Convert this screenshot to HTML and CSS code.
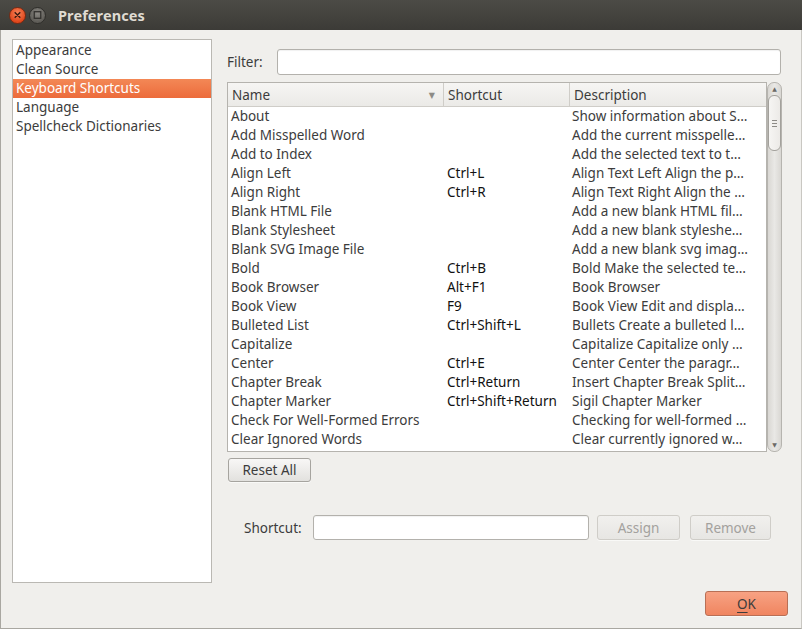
FILE: index.html
```html
<!DOCTYPE html>
<html>
<head>
<meta charset="utf-8">
<link rel="stylesheet" href="styles.css">
</head>
<body>
<div class="window">
  <div class="titlebar">
    <div class="tb-btn close"><svg width="16" height="16" viewBox="0 0 16 16"><path d="M5.5 5.5l5 5M10.5 5.5l-5 5" stroke="#3a1a10" stroke-width="1.6" stroke-linecap="round"/></svg></div>
    <div class="tb-btn max"><svg width="16" height="16" viewBox="0 0 16 16"><rect x="4.5" y="4.5" width="7" height="7" fill="none" stroke="#2e2d2a" stroke-width="1.3"/></svg></div>
    <div class="title">Preferences</div>
  </div>
  <div class="body">
    <div class="main">
      <ul class="sidebar">
        <li>Appearance</li>
        <li>Clean Source</li>
        <li class="sel">Keyboard Shortcuts</li>
        <li>Language</li>
        <li>Spellcheck Dictionaries</li>
      </ul>
      <div class="pane">
        <div class="filter-row">
          <label>Filter:</label>
          <div class="input filter-input"></div>
        </div>
        <div class="table-wrap">
          <div class="table">
            <div class="thead">
              <div class="th c1">Name<span class="sort">&#9660;</span></div>
              <div class="th c2">Shortcut</div>
              <div class="th c3">Description</div>
            </div>
            <div class="tbody">
              <div class="tr"><span class="c1">About</span><span class="c2"></span><span class="c3">Show information about S…</span></div>
              <div class="tr"><span class="c1">Add Misspelled Word</span><span class="c2"></span><span class="c3">Add the current misspelle…</span></div>
              <div class="tr"><span class="c1">Add to Index</span><span class="c2"></span><span class="c3">Add the selected text to t…</span></div>
              <div class="tr"><span class="c1">Align Left</span><span class="c2">Ctrl+L</span><span class="c3">Align Text Left Align the p…</span></div>
              <div class="tr"><span class="c1">Align Right</span><span class="c2">Ctrl+R</span><span class="c3">Align Text Right Align the …</span></div>
              <div class="tr"><span class="c1">Blank HTML File</span><span class="c2"></span><span class="c3">Add a new blank HTML fil…</span></div>
              <div class="tr"><span class="c1">Blank Stylesheet</span><span class="c2"></span><span class="c3">Add a new blank styleshe…</span></div>
              <div class="tr"><span class="c1">Blank SVG Image File</span><span class="c2"></span><span class="c3">Add a new blank svg imag…</span></div>
              <div class="tr"><span class="c1">Bold</span><span class="c2">Ctrl+B</span><span class="c3">Bold Make the selected te…</span></div>
              <div class="tr"><span class="c1">Book Browser</span><span class="c2">Alt+F1</span><span class="c3">Book Browser</span></div>
              <div class="tr"><span class="c1">Book View</span><span class="c2">F9</span><span class="c3">Book View Edit and displa…</span></div>
              <div class="tr"><span class="c1">Bulleted List</span><span class="c2">Ctrl+Shift+L</span><span class="c3">Bullets Create a bulleted l…</span></div>
              <div class="tr"><span class="c1">Capitalize</span><span class="c2"></span><span class="c3">Capitalize Capitalize only …</span></div>
              <div class="tr"><span class="c1">Center</span><span class="c2">Ctrl+E</span><span class="c3">Center Center the paragr…</span></div>
              <div class="tr"><span class="c1">Chapter Break</span><span class="c2">Ctrl+Return</span><span class="c3">Insert Chapter Break Split…</span></div>
              <div class="tr"><span class="c1">Chapter Marker</span><span class="c2">Ctrl+Shift+Return</span><span class="c3">Sigil Chapter Marker</span></div>
              <div class="tr"><span class="c1">Check For Well-Formed Errors</span><span class="c2"></span><span class="c3">Checking for well-formed …</span></div>
              <div class="tr"><span class="c1">Clear Ignored Words</span><span class="c2"></span><span class="c3">Clear currently ignored w…</span></div>
            </div>
          </div>
          <div class="scrollbar">
            <div class="sb-arrow up">&#9650;</div>
            <div class="sb-thumb"><span class="grip"></span></div>
            <div class="sb-space"></div>
            <div class="sb-arrow down">&#9660;</div>
          </div>
        </div>
        <div class="reset-row">
          <button class="btn">Reset All</button>
        </div>
        <div class="shortcut-row">
          <label>Shortcut:</label>
          <div class="input shortcut-input"></div>
          <button class="btn disabled assign">Assign</button>
          <button class="btn disabled remove">Remove</button>
        </div>
      </div>
    </div>
    <div class="footer">
      <button class="btn ok"><u>O</u>K</button>
    </div>
  </div>
</div>
</body>
</html>
```

FILE: styles.css
```css
* { box-sizing: border-box; }
html, body { margin: 0; padding: 0; }
body {
  width: 802px;
  height: 629px;
  overflow: hidden;
  font-family: "Noto Sans", "DejaVu Sans", sans-serif;
  font-size: 13.5px;
  color: #3c3c3c;
  background: #f0efec;
}
.window {
  width: 802px;
  height: 629px;
  display: flex;
  flex-direction: column;
}
.titlebar {
  height: 30px;
  flex: none;
  background: linear-gradient(#4c4b46, #3c3b37);
  display: flex;
  align-items: center;
  padding-left: 9px;
}
.tb-btn {
  width: 17px;
  height: 17px;
  border-radius: 50%;
  display: flex;
  align-items: center;
  justify-content: center;
  margin-right: 3px;
}
.tb-btn.close {
  background: radial-gradient(circle at 50% 35%, #f7845a, #e0471c 70%);
  border: 1px solid #7a2a12;
}
.tb-btn.max {
  background: radial-gradient(circle at 50% 35%, #8a8883, #5e5c57 70%);
  border: 1px solid #2f2e2b;
}
.title {
  color: #dfdbd2;
  font-weight: bold;
  font-size: 14.5px;
  margin-left: 9px;
  letter-spacing: 0.1px;
}
.body {
  flex: 1;
  display: flex;
  flex-direction: column;
  border-left: 1px solid #a9a7a1;
  border-bottom: 1px solid #a9a7a1;
  border-right: 1px solid #c9c7c2;
  padding: 9px 13px 12px 11px;
}
.main {
  flex: 1;
  display: flex;
  gap: 15px;
}
.sidebar {
  list-style: none;
  margin: 0;
  padding: 1px 0 0 0;
  width: 200px;
  height: 544px;
  background: #fff;
  border: 1px solid #bab8b3;
  flex: none;
}
.sidebar li {
  height: 19px;
  line-height: 19px;
  padding-left: 3px;
  white-space: nowrap;
}
.sidebar li.sel {
  background: linear-gradient(#f38856, #ec6b3b);
  color: #fff;
}
.pane {
  flex: 1;
  display: flex;
  flex-direction: column;
  padding-top: 10px;
}
.filter-row {
  display: flex;
  align-items: center;
  height: 26px;
  margin-bottom: 7px;
}
.filter-row label { width: 50px; }
.input {
  height: 26px;
  background: #fff;
  border: 1px solid #b3b1ac;
  border-radius: 3px;
  box-shadow: inset 0 1px 1px rgba(0,0,0,0.06);
}
.filter-input { width: 504px; height: 26px; }
.table-wrap {
  display: flex;
  height: 370px;
}
.table {
  width: 540px;
  border: 1px solid #b5b3ae;
  background: #fff;
  display: flex;
  flex-direction: column;
  overflow: hidden;
}
.thead {
  height: 24px;
  display: flex;
  flex: none;
  background: linear-gradient(#f6f5f3, #ebeae7);
  border-bottom: 1px solid #cfcdc8;
}
.th {
  line-height: 24px;
  padding-left: 4px;
  border-right: 1px solid #cfcdc8;
  position: relative;
}
.th.c3 { border-right: none; }
.c1 { width: 216px; flex: none; }
.c2 { width: 126px; flex: none; }
.c3 { flex: 1; }
.sort {
  position: absolute;
  right: 8px;
  top: 0;
  font-size: 8px;
  color: #8d8b86;
}
.tr {
  display: flex;
  height: 19px;
  line-height: 19px;
  white-space: nowrap;
}
.tr span { padding-left: 3px; overflow: hidden; }
.tr .c2 { color: #111; padding-left: 3px; }
.tr .c3 { padding-left: 2px; }
.scrollbar {
  width: 15px;
  border: 1px solid #b6b4af;
  border-radius: 7px;
  background: linear-gradient(90deg, #d9d7d3, #e9e8e5 50%, #d9d7d3);
  display: flex;
  flex-direction: column;
  align-items: center;
}
.sb-arrow {
  font-size: 6px;
  color: #6b6a66;
  height: 12px;
  line-height: 12px;
  flex: none;
}
.sb-thumb {
  width: 13px;
  height: 56px;
  border: 1px solid #a3a19c;
  border-radius: 6px;
  background: linear-gradient(90deg, #f6f5f3, #eceae7);
  display: flex;
  align-items: center;
  justify-content: center;
  flex: none;
}
.grip {
  width: 5px;
  height: 7px;
  background: repeating-linear-gradient(#8d8b86 0 1px, transparent 1px 3px);
}
.sb-space { flex: 1; }
.reset-row {
  margin-top: 6px;
  padding-left: 1px;
}
.btn {
  font-family: inherit;
  font-size: 13.5px;
  color: #3c3c3c;
  height: 24px;
  padding: 0;
  border: 1px solid #a6a49f;
  border-radius: 3px;
  background: linear-gradient(#f8f7f6, #e2e1de);
  box-shadow: 0 1px 0 rgba(255,255,255,0.6);
}
.reset-row .btn { width: 83px; }
.shortcut-row {
  display: flex;
  align-items: center;
  margin-top: 33px;
  padding-left: 17px;
}
.shortcut-row label { width: 69px; }
.shortcut-input { width: 276px; height: 25px; }
.btn.disabled {
  color: #a3a19d;
  border-color: #cfcdc8;
  background: linear-gradient(#f1f0ee, #e7e6e3);
}
.btn.assign { width: 83px; margin-left: 8px; height: 25px; }
.btn.remove { width: 81px; margin-left: 10px; height: 25px; }
.footer {
  display: flex;
  justify-content: flex-end;
}
.btn.ok {
  width: 83px;
  height: 25px;
  background: linear-gradient(#f7a283, #f08560);
  border-color: #b86f55;
  color: #3c3c3c;
}
.btn.ok u { text-underline-offset: 3px; }
```
